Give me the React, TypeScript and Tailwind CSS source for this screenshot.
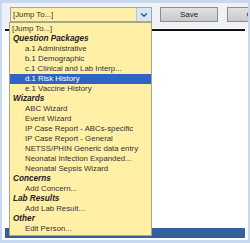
import { ChevronDown } from 'lucide-react'

const ITEMS: { label: string; kind: 'first' | 'group' | 'item'; active?: boolean }[] = [
  { label: '[Jump To...]', kind: 'first' },
  { label: 'Question Packages', kind: 'group' },
  { label: 'a.1 Administrative', kind: 'item' },
  { label: 'b.1 Demographic', kind: 'item' },
  { label: 'c.1 Clinical and Lab Interp...', kind: 'item' },
  { label: 'd.1 Risk History', kind: 'item', active: true },
  { label: 'e.1 Vaccine History', kind: 'item' },
  { label: 'Wizards', kind: 'group' },
  { label: 'ABC Wizard', kind: 'item' },
  { label: 'Event Wizard', kind: 'item' },
  { label: 'IP Case Report - ABCs-specific', kind: 'item' },
  { label: 'IP Case Report - General', kind: 'item' },
  { label: 'NETSS/PHIN Generic data entry', kind: 'item' },
  { label: 'Neonatal Infection Expanded...', kind: 'item' },
  { label: 'Neonatal Sepsis Wizard', kind: 'item' },
  { label: 'Concerns', kind: 'group' },
  { label: 'Add Concern...', kind: 'item' },
  { label: 'Lab Results', kind: 'group' },
  { label: 'Add Lab Result...', kind: 'item' },
  { label: 'Other', kind: 'group' },
  { label: 'Edit Person...', kind: 'item' },
]

export default function App() {
  return (
    <div className="relative h-[243px] w-[250px] overflow-hidden bg-[#c8d8ee] pt-[3px] pl-[2px] pr-[2px] pb-[3px] font-['Liberation_Sans',Arial,sans-serif] text-[7.8px] text-[#222]">
      <div className="flex h-full flex-col bg-white">
        {/* toolbar - the Cancel button runs off the right edge, as in the source */}
        <div className="flex h-[25px] shrink-0 items-start overflow-hidden bg-[#eef1f6] pt-[4px] pl-[8px]">
          <div className="flex h-[15px] w-[142px] shrink-0 items-center border border-[#9aa6b8] bg-[#fff0a6]">
            <span className="flex-1 pl-[2px] text-[#333]">[Jump To...]</span>
            <span className="flex h-full w-[15px] items-center justify-center border-l border-[#b8c6da] bg-[#dbe6f4]">
              <ChevronDown size={10} strokeWidth={3} className="text-[#2d4f8c]" />
            </span>
          </div>
          <button
            type="button"
            className="ml-[8px] flex h-[15px] w-[58px] shrink-0 items-center justify-center border border-[#8c8c8c] bg-gradient-to-b from-[#e2e2e2] to-[#c9c9c9] text-[8px] text-[#222]"
          >
            Save
          </button>
          <button
            type="button"
            className="ml-[9px] flex h-[15px] w-[64px] shrink-0 items-center justify-center border border-[#8c8c8c] bg-gradient-to-b from-[#e2e2e2] to-[#c9c9c9] text-[8px] text-[#222]"
          >
            Cancel
          </button>
        </div>
        <div className="mx-[3px] mt-[1px] h-[2px] bg-[#111]" />
        <div className="flex-1" />
        <div className="mx-[3px] mb-[2px] h-[10px] bg-[#355f9f]" />
      </div>

      {/* open dropdown list */}
      <div className="absolute top-[22px] left-[9px] w-[143px] border border-[#a5a58c] bg-[#fff0a6] py-[1px]">
        {ITEMS.map((it) => (
          <div
            key={it.label}
            className={
              'flex h-[10px] items-center whitespace-nowrap leading-none ' +
              (it.kind === 'group'
                ? 'pl-[3px] font-bold italic text-[8.2px] text-[#222]'
                : it.kind === 'first'
                  ? 'pl-[2px] text-[#333]'
                  : 'pl-[15px] text-[#333]') +
              (it.active ? ' bg-[#3163c2] text-white' : '')
            }
          >
            {it.label}
          </div>
        ))}
      </div>
    </div>
  )
}
